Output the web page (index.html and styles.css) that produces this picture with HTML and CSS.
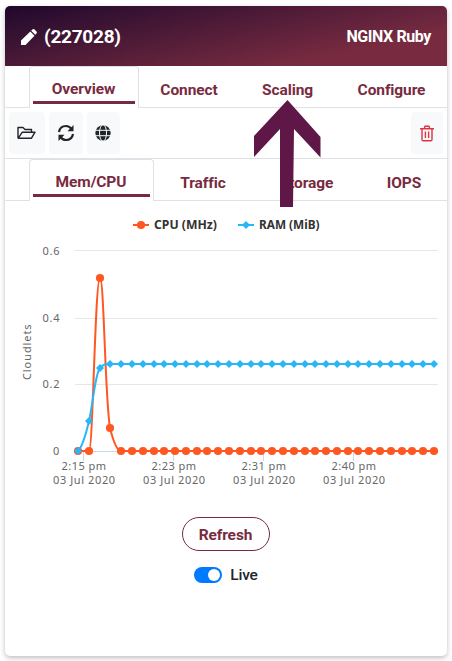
FILE: index.html
```html
<!DOCTYPE html>
<html lang="en">
<head>
<meta charset="utf-8">
<title>NGINX Ruby</title>
<link rel="stylesheet" href="styles.css">
</head>
<body>
<main class="card">
  <header class="header">
    <svg class="pencil" width="16" height="16" viewBox="0 0 16 16"><path fill="#fff" d="M0 11.500 9.300 2.500l4.200 4.200L4.500 16H0zM10.200 1.700l1.200-1.100q1.100-1 2.200 0l1.800 1.800q1 1.100 0 2.200L14.300 5.800z"/></svg>
    <h1 class="env">(227028)</h1>
    <strong class="node">NGINX Ruby</strong>
  </header>
  <nav class="tabs tabs-main">
    <span class="edge"></span>
    <a class="tab active"><span>Overview</span></a>
    <a class="tab"><span>Connect</span></a>
    <a class="tab"><span>Scaling</span></a>
    <a class="tab"><span>Configure</span></a>
  </nav>
  <div class="toolbar">
    <button class="tool folder" aria-label="Files"><svg width="19" height="14" viewBox="0 0 19 14" fill="none" stroke="#212529" stroke-width="1.400" stroke-linejoin="round"><path d="M1 12V1.500h5l2 2h6.500v2.700M1.300 12.200l4-6H18l-3.500 6z"/></svg></button>
    <button class="tool sync" aria-label="Reload"><svg width="18" height="18" viewBox="0 0 18 18" fill="none" stroke="#212529" stroke-width="2.200"><path d="M2 8Q3 2 9 2q3.500 0 6 3.500M16 10q-1 6-7 6-3.500 0-6-3.500"/><path d="M16.500 1v6.200H10.500zM1.500 17v-6.200h6z" fill="#212529" stroke="none"/></svg></button>
    <button class="tool globe" aria-label="Open"><svg width="16" height="16" viewBox="0 0 16 16"><circle cx="8" cy="8" r="7.700" fill="#212529"/><g fill="none" stroke="#f8f9fa" stroke-width="1"><path d="M0 5.300h16M0 10.700h16"/><ellipse cx="8" cy="8" rx="3.500" ry="8.300"/></g></svg></button>
    <button class="tool trash" aria-label="Delete"><svg width="14" height="17" viewBox="0 0 14 17" fill="none" stroke="#dc3545" stroke-width="1.400"><path d="M0 3.700h14M4.300 3.500 5 1.200h4l.7 2.300M2 4v10.500q0 1.300 1.300 1.300h7.400q1.300 0 1.300-1.300V4M5.400 6.500v6.500M8.600 6.500v6.500"/></svg></button>
  </div>
  <nav class="tabs tabs-stats">
    <span class="edge"></span>
    <a class="tab active"><span>Mem/CPU</span></a>
    <a class="tab"><span>Traffic</span></a>
    <a class="tab"><span>Storage</span></a>
    <a class="tab"><span>IOPS</span></a>
  </nav>
  <svg class="chart" width="442" height="299" viewBox="5 201 442 299">
    <defs>
      <marker id="dot" markerUnits="userSpaceOnUse" markerWidth="10" markerHeight="10" refX="5" refY="5"><circle cx="5" cy="5" r="4.100" fill="#ff5722"/></marker>
      <marker id="diamond" markerUnits="userSpaceOnUse" markerWidth="10" markerHeight="10" refX="5" refY="5"><path d="M5 1l4 4-4 4-4-4z" fill="#29b6f6"/></marker>
    </defs>
    <g class="legend">
      <path d="M133 225h16" stroke="#ff5722" stroke-width="2"/><circle cx="141" cy="225" r="4.100" fill="#ff5722"/>
      <text x="154" y="229" textLength="63" lengthAdjust="spacingAndGlyphs">CPU (MHz)</text>
      <path d="M238 225h16" stroke="#29b6f6" stroke-width="2"/><path d="M246 221l4 4-4 4-4-4z" fill="#29b6f6"/>
      <text x="259" y="229" textLength="60.500" lengthAdjust="spacingAndGlyphs">RAM (MiB)</text>
    </g>
    <path class="grid" d="M75 250.500h363M75 318.500h363M75 384.500h363"/>
    <path class="axis" d="M75 451.500h363M83.500 451v10M173.500 451v10M263.500 451v10M353.500 451v10"/>
    <g class="labels">
      <text x="42.500" y="255" textLength="17.500">0.6</text>
      <text x="42.500" y="322" textLength="17.500">0.4</text>
      <text x="42.500" y="388" textLength="17.500">0.2</text>
      <text x="53" y="455">0</text>
      <text x="61.500" y="470" textLength="45">2:15 pm</text><text x="53" y="484" textLength="62.500">03 Jul 2020</text>
      <text x="151.500" y="470" textLength="45">2:23 pm</text><text x="143" y="484" textLength="62.500">03 Jul 2020</text>
      <text x="241.500" y="470" textLength="45">2:31 pm</text><text x="233" y="484" textLength="62.500">03 Jul 2020</text>
      <text x="331.500" y="470" textLength="45">2:40 pm</text><text x="323" y="484" textLength="62.500">03 Jul 2020</text>
      <text transform="translate(31 380) rotate(-90)" textLength="56">Cloudlets</text>
    </g>
    <path class="line cpu" d="M78 451H89C93 451 95 278 100 278C104 278 105 398 110 428C113 440 117 451 121 451H434"/>
    <polyline class="points dots" points="78,451 89,451 100,278 110,428 121,451 132,451 143,451 154,451 164,451 175,451 186,451 197,451 207,451 218,451 229,451 240,451 251,451 261,451 272,451 283,451 294,451 305,451 315,451 326,451 337,451 348,451 358,451 369,451 380,451 391,451 402,451 412,451 423,451 434,451"/>
    <path class="line ram" d="M78 451C82 447 86 434 89 421C93 404 95 374 100 368C103 364 106 364 110 364H434"/>
    <polyline class="points diamonds" points="78,451 89,421 100,368 110,364 121,364 132,364 143,364 154,364 164,364 175,364 186,364 197,364 207,364 218,364 229,364 240,364 251,364 261,364 272,364 283,364 294,364 305,364 315,364 326,364 337,364 348,364 358,364 369,364 380,364 391,364 402,364 412,364 423,364 434,364"/>
  </svg>
  <footer class="actions">
    <button class="refresh">Refresh</button>
    <label class="live"><span class="switch"></span><span>Live</span></label>
  </footer>
  <svg class="arrow" width="68" height="108" viewBox="253 99 68 108"><path fill="#5f1747" d="M287.500 100 320.500 137V157.500L294 129 293 207H280V129L254 157V136z"/></svg>
</main>
</body>
</html>
```
FILE: styles.css
```css
* { box-sizing: border-box; }
body { margin: 0; padding: 6px 5px 5px; background: #fff; font-family: Roboto, sans-serif; color: #212529; }
.card { position: relative; width: 442px; height: 650px; border-radius: 5px; background: #fff; box-shadow: 0 2px 5px rgba(0,0,0,.26); }
.header { height: 60px; display: flex; align-items: center; padding: 1px 16px 0 16px; color: #fff; border-radius: 5px 5px 0 0; background: linear-gradient(168deg, #1f0728 0%, #2d0e30 12%, #782b40 78%, #782b40 100%); }
.pencil { margin-right: 7px; }
.env { margin: 0; font-size: 19px; font-weight: 700; letter-spacing: -.25px; }
.node { margin-left: auto; font-size: 16px; font-weight: 700; letter-spacing: -.4px; }
.tabs { display: grid; height: 42px; }
.tabs-main { grid-template-columns: 24px 110px 100px 97px 111px; }
.tabs-stats { grid-template-columns: 24px 125px 98px 109px 86px; }
.edge, .tab { border-bottom: 1px solid #dee2e6; }
.tab { display: flex; align-items: center; justify-content: center; padding-top: 7px; font-size: 15.5px; font-weight: 700; letter-spacing: -.1px; color: #782b40; white-space: nowrap; }
.tab.active { border: 1px solid #dee2e6; border-bottom: 0; border-radius: 4px 4px 0 0; padding: 4px 3px 4px; }
.tab.active span { flex: 1; align-self: stretch; display: flex; align-items: center; justify-content: center; border-bottom: 3px solid #782b40; padding: 6px 1px 0 0; }
.toolbar { height: 51px; display: flex; gap: 4px; padding: 4px 4px; border-bottom: 1px solid #dee2e6; }
.tool { height: 42px; display: flex; align-items: center; justify-content: center; border: 0; border-radius: 4px; padding: 0; background: #f8f9fa; }
.folder { width: 36px; padding-right: 2px; }
.sync { width: 34px; padding-right: 1px; }
.globe { width: 33px; padding-right: 1px; }
.trash { width: 32px; margin-left: auto; }
.chart { display: block; }
.legend text { font: 700 12px "Noto Sans", sans-serif; fill: #333; }
.labels text { font: 11px "Noto Sans", sans-serif; fill: #666; letter-spacing: .4px; }
.grid { stroke: #e6e6e6; fill: none; }
.axis { stroke: #ccd6eb; fill: none; }
.line { fill: none; stroke-width: 2; }
.cpu { stroke: #ff5722; }
.ram { stroke: #29b6f6; }
.points { fill: none; stroke: none; }
.dots { marker: url(#dot); }
.diamonds { marker: url(#diamond); }
.actions { display: flex; flex-direction: column; align-items: center; padding-top: 17px; }
.refresh { width: 88px; height: 34px; margin-right: 1px; padding: 1px 0 0; border: 1px solid #782b40; border-radius: 17px; background: #fff; color: #782b40; font: 700 15.5px Roboto, sans-serif; letter-spacing: -.1px; }
.live { display: flex; align-items: center; gap: 8px; margin-top: 15px; font-size: 15.5px; font-weight: 500; letter-spacing: -.2px; }
.switch { width: 28px; height: 16px; padding: 2px; border-radius: 8px; background: #007bff; }
.switch::after { content: ""; display: block; width: 12px; height: 12px; margin-left: auto; border-radius: 50%; background: #fff; }
.arrow { position: absolute; left: 248px; top: 93px; }
```
